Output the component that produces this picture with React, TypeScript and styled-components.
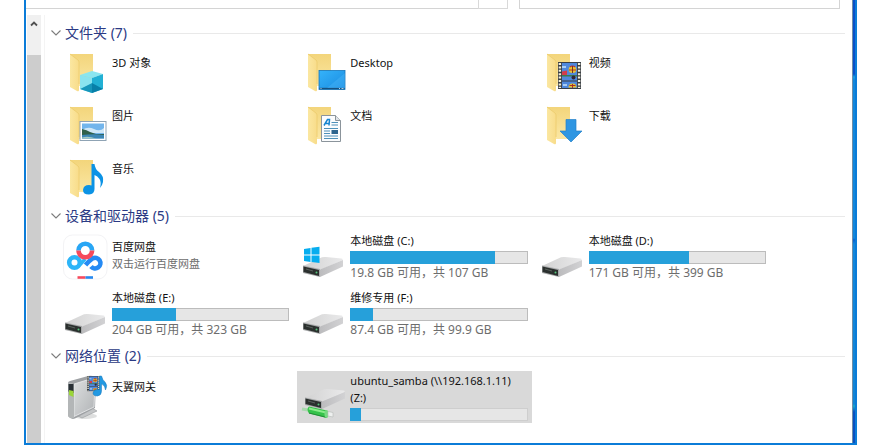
import React from "react";
import styled, { createGlobalStyle } from "styled-components";

const GlobalStyle = createGlobalStyle`
  * { box-sizing: border-box; }
  body {
    margin: 0;
    background: #ffffff;
    color: #1a1a1a;
    font-family: "Noto Sans", "Noto Sans CJK SC", sans-serif;
    font-size: 11px;
    line-height: 17px;
  }
`;

const Window = styled.div`
  display: flex;
  margin: 0 32px 3px 24px;
  min-height: calc(100vh - 3px);
  border: 2px solid #0b7cd8;
  border-top: 0;
`;

const Client = styled.div`
  flex: 1;
  min-width: 0;
  display: flex;
  flex-direction: column;
  background: #ffffff;
`;

const DesktopEdge = styled.div`
  width: 3px;
  border-left: 1px solid #6f8ea8;
  background: linear-gradient(
    #0a50c8 0, #0a50c8 74px, #18a0e0 77px, #1287dc 80px, #1287dc 238px,
    #0a5fd0 240px, #1287dc 244px, #1284d4 404px, #18a8c8 406px, #0a50c0 412px
  );
`;

const TopBar = styled.div`
  display: flex;
  height: 9px;
  padding-right: 12px;
`;

const AddressBox = styled.input`
  flex: 1;
  min-width: 0;
  padding: 0 8px;
  border: solid #d4d4d4;
  border-width: 0 0 1px;
  background: #ffffff;
  outline: none;
`;

const RefreshButton = styled.button`
  width: 30px;
  padding: 0;
  border: solid #d9d9d9;
  border-width: 0 1px 1px;
  background: #ffffff;
`;

const SearchBox = styled.input`
  width: 321px;
  margin-left: 11px;
  padding: 0 8px;
  border: 1px solid #d4d4d4;
  border-top: 0;
  background: #ffffff;
  outline: none;
`;

const Body = styled.div`
  flex: 1;
  display: flex;
  padding: 6px 7px 0 1px;
`;

const ScrollBar = styled.div`
  width: 14px;
  display: flex;
  flex-direction: column;
  background: #f0f0f0;
`;

const ScrollUp = styled.button`
  display: flex;
  justify-content: center;
  height: 40px;
  padding: 5px 0 0;
  border: 0;
  background: transparent;
`;

const ScrollThumb = styled.div`
  flex: 1;
  background: #cdcdcd;
`;

const Content = styled.main`
  flex: 1;
  min-width: 0;
  margin-left: 3px;
  padding: 8px 0 0 6px;
  border-left: 1px solid #f4f4f4;
`;

const Section = styled.section`
  margin-bottom: 3px;
`;

const SectionHeader = styled.h2`
  display: flex;
  align-items: center;
  gap: 6px;
  height: 20px;
  margin: 0;

  &::after {
    content: "";
    flex: 1;
    height: 1px;
    background: #e9e9e9;
  }
`;

const SectionToggle = styled.button`
  display: flex;
  align-items: center;
  gap: 4px;
  padding: 0;
  border: 0;
  background: transparent;
  color: #2b3a84;
  font: inherit;
  font-weight: 400;
  font-size: 14px;
  line-height: 20px;
  white-space: nowrap;
`;

const TileGrid = styled.ul<{ $top: number }>`
  display: grid;
  grid-template-columns: repeat(3, 1fr);
  margin: 0;
  padding: ${(p) => p.$top}px 71px 0 8px;
  list-style: none;
`;

type TileKind = "folder" | "drive" | "network";
const tileHeight = { folder: 53, drive: 57, network: 52 };
const tilePadding = { folder: 4, drive: 3, network: 1 };

const TileIcon = styled.svg`
  flex: none;
  width: 48px;
  height: 48px;
`;

const Tile = styled.li<{ $kind: TileKind; $selected?: boolean }>`
  display: flex;
  align-items: flex-start;
  gap: 2px;
  min-height: ${(p) => tileHeight[p.$kind]}px;
  margin-right: 4px;
  padding: ${(p) => tilePadding[p.$kind]}px 4px 0 3px;
  background: ${(p) => (p.$selected ? "#d9d9d9" : "transparent")};

  ${TileIcon} {
    margin-top: ${(p) => (p.$kind === "folder" ? 0 : 1)}px;
  }
`;

const TileText = styled.div<{ $inset?: boolean }>`
  flex: 1;
  min-width: 0;
  padding-top: ${(p) => (p.$inset ? 6 : 0)}px;
`;

const Name = styled.div`
  color: #111111;
`;

const Detail = styled.div`
  color: #6d6d6d;
  white-space: nowrap;
`;

const Capacity = styled(Detail)`
  font-size: 12px;
`;

const Meter = styled.div<{ $flat?: boolean }>`
  height: 13px;
  margin-top: 2px;
  background: #e6e6e6;
  box-shadow: inset 0 0 0 1px ${(p) => (p.$flat ? "#cecece" : "#bcbcbc")};
`;

const MeterFill = styled.div`
  height: 100%;
  background: #26a0da;
`;

const FolderShape = () => (
  <>
    <path d="M8 6H31V38H16L8 38Z" fill="url(#folderBack)" />
    <path d="M8 6L16 12Q17 13 17 14V42Q17 44 15 43L8 39Z" fill="url(#folderFlap)" />
    <path d="M8 6L16 12Q17 13 17 14V36" fill="none" stroke="#eccb6c" strokeWidth="0.8" />
  </>
);

const Film = () => (
  <>
    <rect x="0" y="0" width="23" height="27" fill="#3a3f45" />
    <path d="M1.900 1V26M21.100 1V26" stroke="#f3f0dc" strokeWidth="2.400" strokeDasharray="2 1.400" />
    <rect x="4" y="1" width="15" height="17.500" fill="#4f88dc" />
    <rect x="4" y="19.500" width="15" height="6.500" fill="#4f88dc" />
    <path d="M4 4h4v2h-4zM5 22h4v2h-4z" fill="#a9cdf4" />
    <path d="M4 9.500l5-1v5h-5z" fill="#d43c4c" />
    <path d="M4 13h15v1.500H4z" fill="#3c7b52" />
    <ellipse cx="14.500" cy="7.500" rx="3.800" ry="3.600" fill="#e9c52f" />
    <path d="M12 5q2.500-2 5 0M11 8h7" stroke="#c03028" strokeWidth="1.200" fill="none" />
    <path d="M14.500 4v7" stroke="#7b3326" />
    <circle cx="15.500" cy="15.500" r="2" fill="#332638" />
    <path d="M10.500 25.500a4 4 0 0 1 8 0z" fill="#e9c52f" />
    <path d="M11.500 23.500h6M14.500 22v4" stroke="#a83128" />
  </>
);

const DriveShape = () => (
  <>
    <path d="M3 33L22 24.300Q24 23.700 26 24L41.500 25.500Q43.500 26 42 27.500L21 36.500Z" fill="url(#driveTop)" />
    <path d="M20 36.500L43 27V33.500L20 44Z" fill="url(#driveSide)" />
    <path d="M3 32.500L20 36V44L3 40Z" fill="#a6a8a9" />
    <path d="M3.500 33.500L19 37V43L3.500 39Z" fill="#2b302e" />
    <path d="M6 36L13 38" stroke="#59615d" strokeWidth="1" />
    <circle cx="16.500" cy="39.500" r="1" fill="#56c57b" />
  </>
);

const icons: Record<string, React.ReactNode> = {
  objects: (
    <>
      <FolderShape />
      <path d="M18 27L30 23L41 26L30 30Z" fill="#8be6f0" />
      <path d="M18 27L30 30V45L18 41Z" fill="#5cd3e6" />
      <path d="M30 30L41 26V41L30 45Z" fill="#22b0d4" />
      <path d="M18 41L30 35V45Z" fill="#1796bb" />
      <path d="M41 41L30 35V45Z" fill="#087fa8" />
      <path d="M18 27L30 30V35L18 41Z" fill="#a9eef5" opacity="0.6" />
    </>
  ),
  desktop: (
    <>
      <FolderShape />
      <rect x="19" y="22.500" width="26" height="19" fill="url(#screen)" stroke="#1574b8" strokeWidth="0.8" />
      <path d="M19.500 40.500H44.500" stroke="#17517f" strokeWidth="1.400" />
      <path d="M20.500 40.500h1M39 40.500h1M41.500 40.500h2" stroke="#d9f0ff" strokeWidth="0.8" />
      <path d="M27 40L45 25V40Z" fill="#52bdfb" opacity="0.35" />
    </>
  ),
  video: (
    <>
      <FolderShape />
      <g transform="translate(19 14)"><Film /></g>
    </>
  ),
  pictures: (
    <>
      <FolderShape />
      <rect x="18" y="20.500" width="26" height="19" fill="#ffffff" stroke="#8fa3b4" strokeWidth="1" />
      <rect x="20" y="22.500" width="22" height="15" fill="#72b5ec" />
      <path d="M20 29Q26 25 32 28T42 27V32H20Z" fill="#cfe7f7" />
      <path d="M20 28Q25 29 28 31L34 33H42V34.500H20Z" fill="#2f604a" />
      <path d="M20 34Q32 32.500 42 34V37.500H20Z" fill="#3c86b4" />
      <path d="M20 36.500Q26 34.500 34 37.500H20Z" fill="#a6cbc2" />
    </>
  ),
  documents: (
    <>
      <FolderShape />
      <path d="M21.500 14.500H35.500L40.500 19.500V40.500H21.500Z" fill="#fbfcfd" stroke="#8b949b" />
      <path d="M35.500 14.500V19.500H40.500" fill="#dfe4e8" stroke="#8b949b" />
      <path d="M24 24.500L27.500 18.500H29.500L29 24.500M26 22.500H29.500" stroke="#1584cf" strokeWidth="1.500" fill="none" />
      <path d="M31.500 21.500H38M31.500 24H38M24 27.500H38M24 30H30M24 32.500H30M24 35H38M24 37.500H38" stroke="#4e91ba" strokeWidth="1" />
      <rect x="31.500" y="29" width="6.500" height="4" fill="#2d658f" />
    </>
  ),
  downloads: (
    <>
      <FolderShape />
      <path d="M27 18.500H37V30H43L32 41L21 30H27Z" fill="#2f96e2" stroke="#2581c8" strokeWidth="0.7" />
    </>
  ),
  music: (
    <>
      <FolderShape />
      <path d="M29.500 10H32.500Q33 15 37 18Q42 22 41 28Q40.500 31 38 34Q39.500 28 37.500 25Q35.500 22 32.500 21V35Q32.500 40 27 40.500Q21 40.500 21 36Q21.500 31 27 31Q28.500 31 29.500 31.500Z" fill="#0c93e5" />
    </>
  ),
  baidu: (
    <>
      <rect x="1.500" y="2" width="43.500" height="44" rx="9" fill="#ffffff" stroke="#f3f3f5" />
      <g fill="none" strokeWidth="4.600">
        <circle cx="12.500" cy="29.500" r="5.300" stroke="#2db5f8" />
        <path d="M29 33.500A5.300 5.300 0 1 0 30.500 25.500Q27 28 23.500 32" stroke="#258af4" />
        <path d="M16.500 33Q20 30 23 26" stroke="#2db5f8" strokeWidth="3.600" />
        <path d="M16.500 17.500A6.800 6.800 0 0 1 30.100 17.500" stroke="#28a6f5" />
        <path d="M16.500 17.500A6.800 6.800 0 0 0 30.100 17.500" stroke="#f64a5c" />
      </g>
      <path d="M15.500 44.500H23.500" stroke="#f64a5c" strokeWidth="2.600" />
      <path d="M23.500 44.500H31" stroke="#2588ef" strokeWidth="2.600" />
    </>
  ),
  system: (
    <>
      <DriveShape />
      <path d="M4 16L10.500 15V21.500H4ZM11.500 14.800L19.500 13.700V21.500H11.500ZM4 22.500H10.500V29L4 28ZM11.500 22.500H19.500V30L11.500 29Z" fill="#06adef" />
    </>
  ),
  drive: <DriveShape />,
  netDrive: (
    <>
      <g transform="translate(2 -8)"><DriveShape /></g>
      <path d="M2 36L8 37" stroke="#a9d9ae" strokeWidth="3" />
      <path d="M9 33.500L27 37.500V45L9 40.500Q6 36 9 33.500Z" fill="#36c34b" />
      <path d="M9 35.500L26 39.500" stroke="#8cec8c" strokeWidth="1.800" />
      <path d="M9 40L27 44.500" stroke="#228b36" strokeWidth="1" />
      <ellipse cx="26.500" cy="41" rx="2" ry="4" fill="#78d982" />
      <path d="M28 38.500L33 39.500V44L28 43Z" fill="#eef0ef" stroke="#b5bab7" strokeWidth="0.6" />
    </>
  ),
  gateway: (
    <>
      <ellipse cx="23" cy="43" rx="12" ry="3" fill="#d0d1d1" opacity="0.7" />
      <path d="M16 43L30 35L35 38L20 45Z" fill="#c3c5c7" stroke="#96989a" strokeWidth="0.6" />
      <path d="M6 10Q6 8.500 8 8L26 3Q34 2 34 7L33 35L13 45.500Q9 47 6 43Z" fill="#9fa2a5" />
      <path d="M12 11L30 5.500Q33 5 33 8L32 34L12 43.500Z" fill="url(#gateway)" stroke="#eceeef" strokeWidth="0.8" />
      <path d="M6 11Q6 9 10 10L12 12V45Q8 46 6 43Z" fill="#b3b6b7" />
      <path d="M6.500 11H11.500V20L6.500 18.500Z" fill="#293036" />
      <path d="M7 17L11.500 18V24L7 22Z" fill="#9bd638" />
      <g transform="translate(25 3) scale(0.56)"><Film /></g>
      <path d="M37.500 3H39.500Q40.500 7 43 9Q46 12 43.500 17Q43 12 39.500 11V18Q39.500 22.500 35.500 23Q31 23 31 20Q31.500 16.500 35.500 16.500H37.500Z" fill="#2299e2" stroke="#1675b6" strokeWidth="0.5" />
    </>
  ),
};

const Icon = ({ name }: { name: string }) => (
  <TileIcon viewBox="0 0 48 48" aria-hidden="true">{icons[name]}</TileIcon>
);

const GradientDefs = styled.svg`
  position: absolute;
`;

const Gradients = () => (
  <GradientDefs width="0" height="0" aria-hidden="true">
    <defs>
      <linearGradient id="folderBack" x2="0" y2="1">
        <stop stopColor="#f3d57b" />
        <stop offset="1" stopColor="#fbe7a4" />
      </linearGradient>
      <linearGradient id="folderFlap">
        <stop stopColor="#fbe7a1" />
        <stop offset="1" stopColor="#f8dc8a" />
      </linearGradient>
      <linearGradient id="driveTop">
        <stop stopColor="#d2d2d2" />
        <stop offset="1" stopColor="#e9e9ea" />
      </linearGradient>
      <linearGradient id="driveSide">
        <stop stopColor="#bcbcbe" />
        <stop offset="1" stopColor="#d2d2d4" />
      </linearGradient>
      <linearGradient id="screen" y2="1">
        <stop stopColor="#35b3fa" />
        <stop offset="1" stopColor="#198be0" />
      </linearGradient>
      <linearGradient id="gateway" y2="1">
        <stop stopColor="#dddfe0" />
        <stop offset="1" stopColor="#b0b3b5" />
      </linearGradient>
    </defs>
  </GradientDefs>
);

type Item = {
  icon: string;
  name: string;
  detail?: string;
  capacity?: string;
  used?: number;
  selected?: boolean;
};
type Group = { title: string; kind: TileKind; top: number; items: Item[] };

const groups: Group[] = [
  {
    title: "文件夹 (7)",
    kind: "folder",
    top: 1,
    items: [
      { icon: "objects", name: "3D 对象" },
      { icon: "desktop", name: "Desktop" },
      { icon: "video", name: "视频" },
      { icon: "pictures", name: "图片" },
      { icon: "documents", name: "文档" },
      { icon: "downloads", name: "下载" },
      { icon: "music", name: "音乐" },
    ],
  },
  {
    title: "设备和驱动器 (5)",
    kind: "drive",
    top: 3,
    items: [
      { icon: "baidu", name: "百度网盘", detail: "双击运行百度网盘" },
      { icon: "system", name: "本地磁盘 (C:)", used: 81.5, capacity: "19.8 GB 可用，共 107 GB" },
      { icon: "drive", name: "本地磁盘 (D:)", used: 56.5, capacity: "171 GB 可用，共 399 GB" },
      { icon: "drive", name: "本地磁盘 (E:)", used: 36, capacity: "204 GB 可用，共 323 GB" },
      { icon: "drive", name: "维修专用 (F:)", used: 13, capacity: "87.4 GB 可用，共 99.9 GB" },
    ],
  },
  {
    title: "网络位置 (2)",
    kind: "network",
    top: 5,
    items: [
      { icon: "gateway", name: "天翼网关" },
      { icon: "netDrive", name: "ubuntu_samba (\\\\192.168.1.11) (Z:)", used: 6, selected: true },
    ],
  },
];

const ItemTile = ({ item, kind }: { item: Item; kind: TileKind }) => (
  <Tile $kind={kind} $selected={item.selected}>
    <Icon name={item.icon} />
    <TileText $inset={item.used === undefined}>
      <Name>{item.name}</Name>
      {item.used !== undefined && (
        <Meter
          role="meter"
          aria-label={item.name}
          aria-valuemin={0}
          aria-valuemax={100}
          aria-valuenow={item.used}
          $flat={item.selected}
        >
          <MeterFill style={{ width: `${item.used}%` }} />
        </Meter>
      )}
      {item.detail && <Detail>{item.detail}</Detail>}
      {item.capacity && <Capacity>{item.capacity}</Capacity>}
    </TileText>
  </Tile>
);

export default function App() {
  return (
    <>
      <GlobalStyle />
      <Gradients />
      <Window lang="zh-CN">
        <Client>
          <TopBar>
            <AddressBox aria-label="地址" />
            <RefreshButton aria-label="刷新" />
            <SearchBox aria-label="搜索" />
          </TopBar>
          <Body>
            <ScrollBar>
              <ScrollUp aria-label="向上滚动">
                <svg width="10" height="8" viewBox="0 0 10 8" aria-hidden="true">
                  <path d="M2 5.500L5 2.500L8 5.500" fill="none" stroke="#505050" strokeWidth="1.800" />
                </svg>
              </ScrollUp>
              <ScrollThumb />
            </ScrollBar>
            <Content>
              {groups.map((group) => (
                <Section key={group.title}>
                  <SectionHeader>
                    <SectionToggle aria-expanded="true">
                      <svg width="10" height="8" viewBox="0 0 10 8" aria-hidden="true">
                        <path d="M0.500 1.500L5 6L9.500 1.500" fill="none" stroke="#7c7c7c" strokeWidth="1.100" />
                      </svg>
                      {group.title}
                    </SectionToggle>
                  </SectionHeader>
                  <TileGrid $top={group.top}>
                    {group.items.map((item) => (
                      <ItemTile key={item.name} item={item} kind={group.kind} />
                    ))}
                  </TileGrid>
                </Section>
              ))}
            </Content>
          </Body>
        </Client>
        <DesktopEdge />
      </Window>
    </>
  );
}
